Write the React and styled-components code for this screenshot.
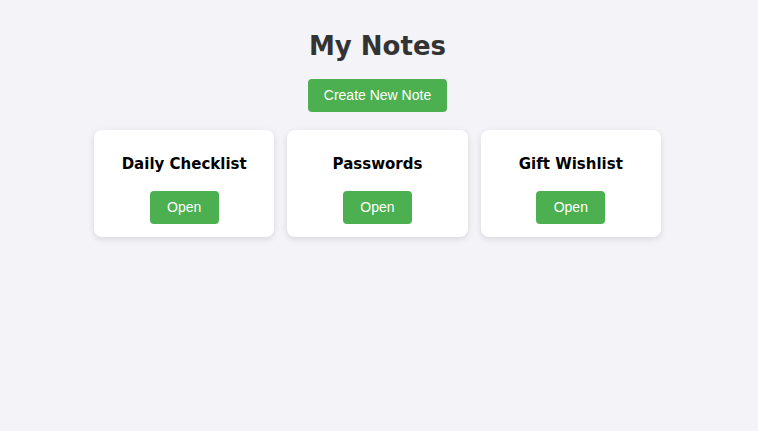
import React from "react";
import styled, { createGlobalStyle } from "styled-components";

const GlobalStyle = createGlobalStyle`
  html, body {
    margin: 0;
    padding: 0;
    background: #f4f4f8;
  }
  body {
    font-family: "DejaVu Sans", Verdana, sans-serif;
  }
`;

const Page = styled.div`
  min-height: 431px;
  display: flex;
  flex-direction: column;
  align-items: center;
  padding: 23px 3px 0 0;
  box-sizing: border-box;
`;

const Title = styled.h1`
  margin: 0;
  font-size: 26px;
  font-weight: bold;
  color: #333;
  line-height: 46px;
`;

const Button = styled.button`
  background: #4caf50;
  color: #fff;
  border: none;
  border-radius: 4px;
  font-family: "Liberation Sans", Arial, sans-serif;
  font-size: 14px;
  line-height: 17px;
  height: 33px;
  padding: 0 ${(p) => (p.$wide ? 17.5 : 16)}px;
  cursor: pointer;
`;

const CreateButton = styled(Button)`
  margin-top: 10px;
`;

const Grid = styled.div`
  display: flex;
  gap: 13px;
  margin-top: 18px;
`;

const Card = styled.div`
  width: 180.33px;
  height: 107px;
  box-sizing: border-box;
  background: #fff;
  border-radius: 8px;
  box-shadow: 0 2px 6px rgba(0, 0, 0, 0.12);
  display: flex;
  flex-direction: column;
  align-items: center;
  padding-top: 25px;
`;

const CardTitle = styled.h3`
  margin: 0 0 17px;
  font-size: 15px;
  font-weight: bold;
  color: #000;
  line-height: 19px;
`;

const notes = ["Daily Checklist", "Passwords", "Gift Wishlist"];

const App = () => {
  return (
    <Page>
      <GlobalStyle />
      <Title>My Notes</Title>
      <CreateButton>Create New Note</CreateButton>
      <Grid>
        {notes.map((n) => (
          <Card key={n}>
            <CardTitle>{n}</CardTitle>
            <Button $wide>Open</Button>
          </Card>
        ))}
      </Grid>
    </Page>
  );
};

export default App;
